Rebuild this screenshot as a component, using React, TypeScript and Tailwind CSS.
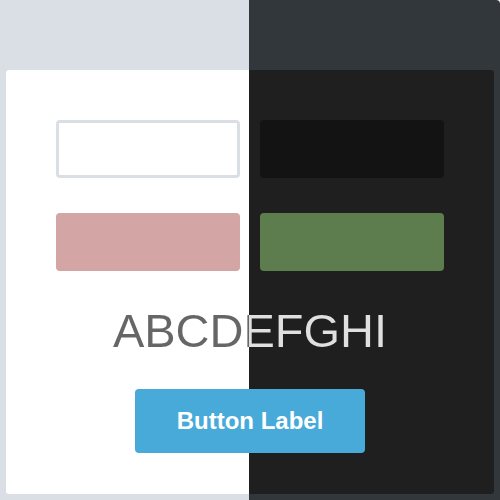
import React from 'react';

export default function App() {
  return (
    <div className="w-[500px] h-[500px] overflow-hidden rounded-tr-[4px] bg-[linear-gradient(to_right,#d9dfe5_249px,#32373b_249px)] pt-[70px] px-[6px] pb-[6px] font-['Liberation_Sans',Arial,sans-serif]">
      <div className="h-full rounded-[3px] bg-[linear-gradient(to_right,#ffffff_243px,#1f1f1f_243px)] flex flex-col items-center pt-[50px]">
        <div className="grid grid-cols-[184px_184px] gap-x-5 gap-y-[35px]">
          <div className="h-[58px] rounded-[4px] border-[3px] border-[#d9dfe5] bg-white" />
          <div className="h-[58px] rounded-[4px] bg-[#131313]" />
          <div className="h-[58px] rounded-[4px] bg-[#d4a5a5]" />
          <div className="h-[58px] rounded-[4px] bg-[#5e7d4f]" />
        </div>
        <div className="w-full mt-[36px] text-center text-[47px] leading-[47px] bg-[linear-gradient(to_right,#666666_243px,#e0e0e0_243px)] bg-clip-text text-transparent">
          ABCDEFGHI
        </div>
        <button className="mt-[35px] w-[230px] h-[64px] rounded-[4px] bg-[#47aad9] text-white text-[24px] font-bold">
          Button Label
        </button>
      </div>
    </div>
  );
}
